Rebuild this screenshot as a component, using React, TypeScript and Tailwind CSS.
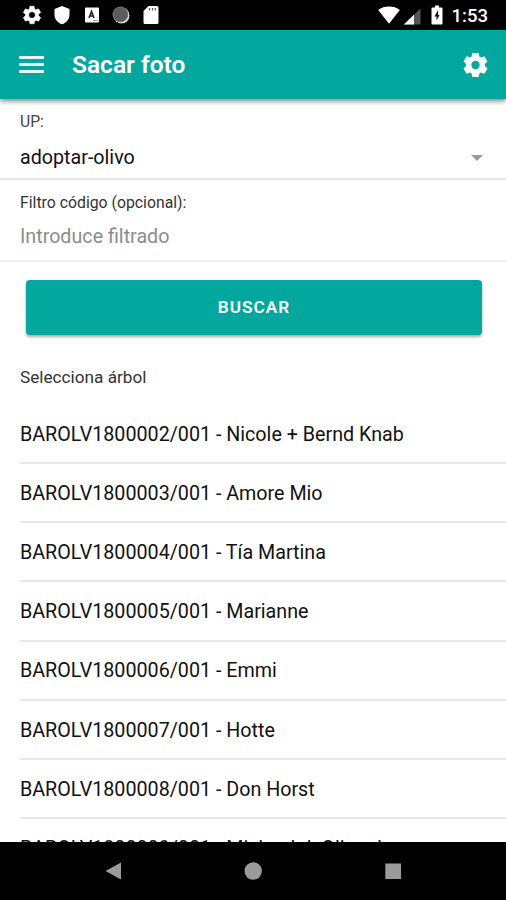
import { useState } from "react";

interface Tree {
  code: string;
  name: string;
}

const trees: Tree[] = [
  { code: "BAROLV1800002/001", name: "Nicole + Bernd Knab" },
  { code: "BAROLV1800003/001", name: "Amore Mio" },
  { code: "BAROLV1800004/001", name: "Tía Martina" },
  { code: "BAROLV1800005/001", name: "Marianne" },
  { code: "BAROLV1800006/001", name: "Emmi" },
  { code: "BAROLV1800007/001", name: "Hotte" },
  { code: "BAROLV1800008/001", name: "Don Horst" },
  { code: "BAROLV1800009/001", name: "Michael d. Oliverd" },
];

const GEAR =
  "M19.14 12.94c.04-.3.06-.61.06-.94 0-.32-.02-.64-.07-.94l2.03-1.58a.49.49 0 0 0 .12-.61l-1.92-3.32a.488.488 0 0 0-.59-.22l-2.39.96c-.5-.38-1.03-.7-1.62-.94l-.36-2.54a.484.484 0 0 0-.48-.41h-3.84c-.24 0-.43.17-.47.41l-.36 2.54c-.59.24-1.13.57-1.62.94l-2.39-.96c-.22-.08-.47 0-.59.22L2.74 8.87c-.12.21-.08.47.12.61l2.03 1.58c-.05.3-.09.63-.09.94s.02.64.07.94l-2.03 1.58a.49.49 0 0 0-.12.61l1.92 3.32c.12.22.37.29.59.22l2.39-.96c.5.38 1.03.7 1.62.94l.36 2.54c.05.24.24.41.48.41h3.84c.24 0 .44-.17.47-.41l.36-2.54c.59-.24 1.13-.56 1.62-.94l2.39.96c.22.08.47 0 .59-.22l1.92-3.32c.12-.22.07-.47-.12-.61l-2.01-1.58zM12 15.6c-1.98 0-3.6-1.62-3.6-3.6s1.62-3.6 3.6-3.6 3.6 1.62 3.6 3.6-1.62 3.6-3.6 3.6z";

function StatusBar() {
  return (
    <div className="flex h-[30px] shrink-0 items-center justify-between bg-black pl-[21px] pr-[18px] text-white">
      <div className="flex items-center">
        <svg className="h-[22px] w-[22px]" viewBox="0 0 24 24" fill="currentColor">
          <path d={GEAR} stroke="currentColor" strokeWidth="0.6" />
        </svg>
        <svg className="ml-[11px] h-[20px] w-[16px]" viewBox="0 0 16 20" fill="currentColor">
          <path d="M8 1 15.5 4v5.500C15.500 14 12.500 17.800 8 19.300 3.500 17.800.5 14 .5 9.500V4z" />
        </svg>
        <svg className="ml-[14px] h-[16px] w-[16px]" viewBox="0 0 16 16">
          <rect x="1" y="0.500" width="14" height="15" rx="1" fill="#fff" />
          <path d="M5 11 7.500 4.500 10 11M6 9h3" fill="none" stroke="#222" strokeWidth="1.600" />
          <path d="M9 13.500h5" stroke="#999" />
        </svg>
        <svg className="ml-[12px] h-[18px] w-[18px]" viewBox="0 0 18 18">
          <circle cx="9.500" cy="9.500" r="8" fill="#d8d8d8" />
          <circle cx="8.400" cy="8.400" r="7.400" fill="#5c5c5c" stroke="#777" />
        </svg>
        <svg className="ml-[13px] h-[20px] w-[16px]" viewBox="0 0 16 20">
          <path d="M5.500 1H14a1.500 1.500 0 0 1 1.500 1.500v15A1.500 1.500 0 0 1 14 19H2a1.500 1.500 0 0 1-1.500-1.500V6z" fill="#fff" />
          <path d="M6.500 3v2.500M9.500 3v2.500M12.300 3v2.500" stroke="#555" strokeWidth="1.200" />
        </svg>
      </div>
      <div className="flex items-center">
        <svg className="h-[18px] w-[22px]" viewBox="0 0 22 18" fill="currentColor">
          <path d="M11 17.800.2 4C6-.6 16-.6 21.800 4z" />
        </svg>
        <svg className="ml-[3px] mt-[2px] h-[17px] w-[18px]" viewBox="0 0 18 17">
          <path d="M17.500.5v16H.8z" fill="#555" />
          <path d="M11 6.700v9.800H.8z" fill="#fff" />
        </svg>
        <svg className="ml-[10px] h-[20px] w-[12px]" viewBox="0 0 12 20">
          <path d="M4 .5h4v2h2.500a1 1 0 0 1 1 1v15a1 1 0 0 1-1 1h-9a1 1 0 0 1-1-1v-15a1 1 0 0 1 1-1H4z" fill="#fff" />
          <path d="M7 5 3.500 11.500h2V15.500L8.500 10H7z" fill="#111" />
        </svg>
        <span className="ml-[9px] mt-[2px] text-[18.500px] font-medium leading-none">1:53</span>
      </div>
    </div>
  );
}

function Header() {
  return (
    <header className="z-10 flex h-[69px] shrink-0 items-center bg-[#02a89e] pl-[19px] pr-[18px] text-white shadow-[0_2px_5px_rgba(0,0,0,0.5)]">
      <button aria-label="Menú" className="flex w-[25px] flex-col gap-[4px]">
        <span className="h-[3px] w-full bg-white/90" />
        <span className="h-[3px] w-full bg-white/90" />
        <span className="h-[3px] w-full bg-white/90" />
      </button>
      <h1 className="ml-[28px] mt-[2px] flex-1 text-[24.500px] font-semibold leading-none">
        Sacar foto
      </h1>
      <button aria-label="Ajustes">
        {/* filled gear with short, wide teeth */}
        <svg className="h-[26px] w-[25px]" viewBox="0 0 25 26" fill="currentColor">
          <path d="M9.300 1h6.400l.7 3.600 1.500.9 3.600-1.300 3 5.300-2.700 2.500v2l2.700 2.500-3 5.300-3.600-1.300-1.500.9-.7 3.600H9.300l-.7-3.600-1.500-.9-3.600 1.300-3-5.300L3.200 14v-2L.5 9.500l3-5.300 3.600 1.300 1.500-.9z" />
          <circle cx="12.500" cy="13" r="4.200" fill="#02a89e" />
        </svg>
      </button>
    </header>
  );
}

function NavBar() {
  return (
    <nav className="flex h-[58px] shrink-0 items-center bg-black pl-[105px]">
      <svg className="h-[18px] w-[296px]" viewBox="0 0 296 18" fill="#9b9b9b">
        <path d="M.5 9 16 .5v17z" />
        <circle cx="148.200" cy="9" r="8.700" />
        <rect x="280.300" y="1.500" width="15.700" height="15.500" />
      </svg>
    </nav>
  );
}

export default function App() {
  const [filter, setFilter] = useState("");

  return (
    <div className="flex h-[900px] w-[506px] flex-col overflow-hidden bg-white font-['Roboto',sans-serif] text-[#111]">
      <StatusBar />
      <Header />
      <main className="flex-1 overflow-hidden">
        <div className="h-[81px] border-b-2 border-[#e8e8e8] px-5 pt-[13px]">
          <div className="text-[15.700px] leading-5 text-[#444]">UP:</div>
          <div className="mt-[13px] flex items-center justify-between pr-[3px]">
            <span className="pt-px text-[19.700px] leading-6">adoptar-olivo</span>
            <svg className="h-[6px] w-[12px]" viewBox="0 0 12 6" fill="#999">
              <path d="M0 0h12L6 6z" />
            </svg>
          </div>
        </div>
        <div className="h-[82px] border-b-2 border-[#efefef] px-5 pt-[13px]">
          <label htmlFor="filter" className="block text-[15.800px] leading-5 text-[#333]">
            Filtro código (opcional):
          </label>
          <input
            id="filter"
            value={filter}
            onChange={(e) => setFilter(e.target.value)}
            placeholder="Introduce filtrado"
            className="mt-[12px] block h-6 w-full text-[19.700px] leading-6 outline-none placeholder:text-[#8c8c8c]"
          />
        </div>
        <button className="mx-[26px] mt-[18px] block h-[55px] w-[456px] rounded-[4px] bg-[#02a89e] text-[17.200px] font-semibold tracking-[1px] text-white shadow-[0_2px_3px_rgba(0,0,0,0.35)]">
          BUSCAR
        </button>
        <div className="mt-[32px] px-5 text-[17.200px] leading-5 text-[#333]">Selecciona árbol</div>
        <ul className="mt-[18px] pl-5">
          {trees.map((tree) => (
            <li
              key={tree.code}
              className="flex h-[59.150px] items-center whitespace-nowrap border-b-2 border-[#e8e8e8] pt-[2px] text-[19.700px]"
            >
              {tree.code} - {tree.name}
            </li>
          ))}
        </ul>
      </main>
      <NavBar />
    </div>
  );
}
